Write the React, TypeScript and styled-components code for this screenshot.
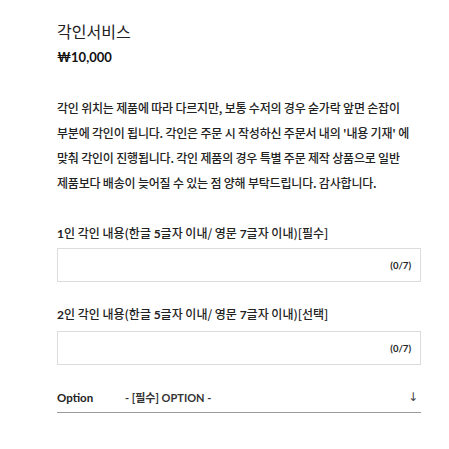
import React from "react";
import styled, { createGlobalStyle } from "styled-components";

const Global = createGlobalStyle`
  html, body { margin: 0; padding: 0; background: #fff; }
  body { font-family: "Noto Sans CJK KR", "Noto Sans", sans-serif; color: #222; }
`;

const Wrapper = styled.div`
  width: 364px;
  padding: 20px 28px 0 57px;
  display: flex;
  flex-direction: column;
`;

const Title = styled.h1`
  margin: 0;
  font-size: 16px;
  line-height: 22px;
  font-weight: 400;
  color: #222;
`;

const Price = styled.div`
  margin-top: 5px;
  font-family: "Lato", "Noto Sans CJK KR", sans-serif;
  font-size: 13px;
  line-height: 20px;
  font-weight: 700;
  color: #111;
`;

const Description = styled.p`
  margin: 28px 0 0;
  font-size: 12px;
  line-height: 25px;
  font-weight: 500;
  letter-spacing: -0.2px;
  color: #222;
`;

const Label = styled.div<{ $top: number }>`
  margin-top: ${(p) => p.$top}px;
  font-size: 12px;
  line-height: 18px;
  font-weight: 500;
  color: #222;
  letter-spacing: 0;
  b { font-family: "Lato", sans-serif; font-weight: 700; }
`;

const InputBox = styled.div<{ $top: number }>`
  margin-top: ${(p) => p.$top}px;
  box-sizing: border-box;
  height: 34px;
  border: 1px solid #dcdcdc;
  display: flex;
  align-items: center;
  justify-content: flex-end;
  padding-right: 9px;
`;

const Counter = styled.span`
  font-family: "Lato", sans-serif;
  font-size: 9.5px;
  font-weight: 700;
  color: #222;
`;

const OptionRow = styled.div`
  margin-top: 17px;
  height: 30px;
  border-bottom: 1px solid #9a9a9a;
  display: flex;
  align-items: center;
`;

const OptionName = styled.span`
  width: 68px;
  font-family: "Lato", sans-serif;
  font-size: 11.5px;
  font-weight: 700;
  color: #222;
`;

const OptionValue = styled.span`
  flex: 1;
  font-family: "Lato", "Noto Sans CJK KR", sans-serif;
  font-size: 11px;
  font-weight: 700;
  color: #333;
`;

const Arrow = styled.span`
  font-family: "DejaVu Sans", sans-serif;
  font-size: 12px;
  color: #444;
  margin-right: 3px;
`;

export default function App() {
  return (
    <>
      <Global />
      <Wrapper>
        <Title>각인서비스</Title>
        <Price>₩10,000</Price>
        <Description>
          각인 위치는 제품에 따라 다르지만, 보통 수저의 경우 숟가락 앞면 손잡이
          <br />
          부분에 각인이 됩니다. 각인은 주문 시 작성하신 주문서 내의 '내용 기재' 에
          <br />
          맞춰 각인이 진행됩니다. 각인 제품의 경우 특별 주문 제작 상품으로 일반
          <br />
          제품보다 배송이 늦어질 수 있는 점 양해 부탁드립니다. 감사합니다.
        </Description>
        <Label $top={29}>
          <b>1</b>인 각인 내용(한글 <b>5</b>글자 이내/ 영문 <b>7</b>글자 이내)[필수]
        </Label>
        <InputBox $top={5}>
          <Counter>(0/7)</Counter>
        </InputBox>
        <Label $top={23}>
          <b>2</b>인 각인 내용(한글 <b>5</b>글자 이내/ 영문 <b>7</b>글자 이내)[선택]
        </Label>
        <InputBox $top={7}>
          <Counter>(0/7)</Counter>
        </InputBox>
        <OptionRow>
          <OptionName>Option</OptionName>
          <OptionValue>- [필수] OPTION -</OptionValue>
          <Arrow>↓</Arrow>
        </OptionRow>
      </Wrapper>
    </>
  );
}
